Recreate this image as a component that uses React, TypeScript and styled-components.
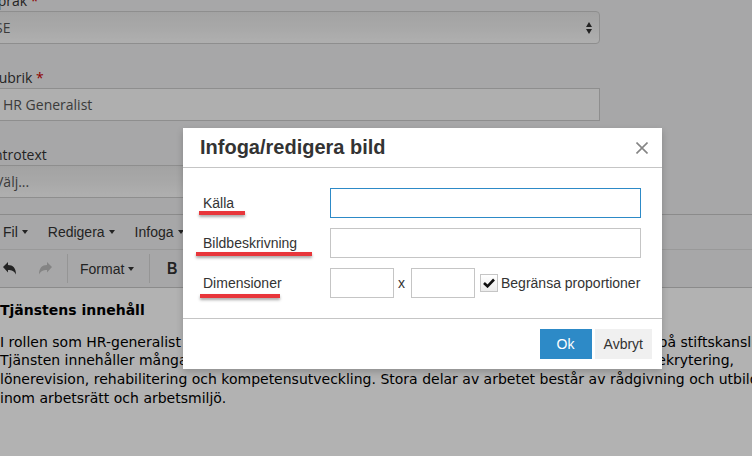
import styled, { createGlobalStyle } from "styled-components";

const GlobalStyle = createGlobalStyle`
    html, body {
        margin: 0;
        padding: 0;
    }
    body {
        width: 752px;
        height: 456px;
        overflow: hidden;
        background: #f0f0f1;
        font-family: "Open Sans", sans-serif;
    }
`;

const Page = styled.div`
    position: relative;
    width: 752px;
    height: 456px;
    overflow: hidden;
`;

const Form = styled.div`
    display: flex;
    flex-direction: column;
    gap: 24px;
    width: 610px;
    margin: -9px 0 0 -10px;
`;

const Field = styled.div`
    display: flex;
    flex-direction: column;
`;

const FieldLabel = styled.label`
    font-size: 14px;
    line-height: 20px;
    color: #333;
`;

const Required = styled.span`
    color: #c00;
`;

const SelectBox = styled.div`
    box-sizing: border-box;
    height: 33px;
    display: flex;
    align-items: center;
    justify-content: space-between;
    padding: 0 7px 0 4px;
    border: 1px solid #ccc;
    border-radius: 4px;
    background: linear-gradient(#e9e9e9, #f2f2f2 55%, #fbfbfb);
    font-size: 14px;
    color: #555;
`;

const TextInput = styled.div`
    box-sizing: border-box;
    height: 33px;
    display: flex;
    align-items: center;
    padding: 0 12px;
    border: 1px solid #ccc;
    background: #fbfbfb;
    font-size: 14px;
    color: #555;
`;

const Editor = styled.div`
    width: 900px;
    margin: 16px 0 0 -10px;
    font-family: "Liberation Sans", Arial, sans-serif;
    color: #333;
`;

const MenuBar = styled.div`
    height: 34px;
    display: flex;
    align-items: center;
    padding-left: 5px;
    gap: 4px;
    border-top: 1px solid #c8c8c8;
    border-bottom: 1px solid #dcdcdc;
`;

const MenuItem = styled.div`
    display: flex;
    align-items: center;
    gap: 4px;
    padding: 0 8px;
    font-size: 14px;
`;

const Caret = styled.span`
    width: 0;
    height: 0;
    border-left: 3px solid transparent;
    border-right: 3px solid transparent;
    border-top: 4px solid #333;
`;

const Toolbar = styled.div`
    height: 37px;
    display: flex;
    align-items: center;
    gap: 1px;
    padding-left: 3px;
    border-bottom: 1px solid #c8c8c8;
`;

const ToolButton = styled.div<{ $disabled?: boolean }>`
    width: 34px;
    height: 29px;
    display: flex;
    align-items: center;
    justify-content: center;
    color: ${({ $disabled }) => ($disabled ? "#bdbdbd" : "#333")};
`;

const MenuButton = styled.div`
    height: 29px;
    display: flex;
    align-items: center;
    gap: 4px;
    padding: 0 10px 0 7px;
    font-size: 14px;
`;

const BoldGlyph = styled.span`
    font-family: "Liberation Sans", Arial, sans-serif;
    font-weight: bold;
    font-size: 17px;
    transform: scaleX(0.85);
`;

const Separator = styled.div`
    width: 1px;
    height: 29px;
    margin: 0 4px;
    background: #d6d6d6;
`;

const Content = styled.div`
    background: #fff;
    height: 200px;
    padding: 13px 0 0 10px;
    font-family: "DejaVu Sans", Verdana, sans-serif;
    font-size: 14px;
    line-height: 18.67px;
    color: #000;
`;

const Heading = styled.p`
    margin: 0;
    font-weight: bold;
`;

const Paragraph = styled.p`
    margin: 13px 0 0;
`;

const Line = styled.span`
    display: block;
    white-space: nowrap;
`;

const Overlay = styled.div`
    position: absolute;
    inset: 0;
    background: rgba(0, 0, 0, 0.3);
`;

const Dialog = styled.div`
    position: absolute;
    left: 183px;
    top: 128px;
    width: 479px;
    background: #fff;
    box-shadow: 0 3px 7px rgba(0, 0, 0, 0.2);
    font-family: "Liberation Sans", Arial, sans-serif;
    color: #333;
`;

const DialogHeader = styled.div`
    height: 39px;
    display: flex;
    align-items: center;
    justify-content: space-between;
    padding: 0 14px 0 17px;
    border-bottom: 1px solid #c5c5c5;
`;

const Title = styled.h1`
    margin: 0;
    font-size: 20px;
    font-weight: bold;
    color: #333;
`;

const CloseButton = styled.div`
    display: flex;
    color: #858585;
`;

const DialogBody = styled.div`
    display: grid;
    grid-template-columns: 127px 1fr;
    grid-auto-rows: 30px;
    row-gap: 10px;
    padding: 20px 21px 20px 20px;
`;

const LabelCell = styled.div`
    position: relative;
    display: flex;
    align-items: center;
    font-size: 14px;
`;

const Mark = styled.div<{ $left: number; $top: number; $width: number }>`
    position: absolute;
    left: ${({ $left }) => $left}px;
    top: ${({ $top }) => $top}px;
    width: ${({ $width }) => $width}px;
    height: 4px;
    background: #e8363b;
    box-shadow: 0 2px 3px rgba(0, 0, 0, 0.35);
`;

const Input = styled.div<{ $focused?: boolean; $width?: number }>`
    box-sizing: border-box;
    flex-shrink: 0;
    height: 30px;
    width: ${({ $width }) => ($width ? `${$width}px` : "100%")};
    border: 1px solid ${({ $focused }) => ($focused ? "#2d8ac7" : "#c5c5c5")};
    background: #fff;
`;

const DimensionRow = styled.div`
    display: flex;
    align-items: center;
    font-size: 14px;
    white-space: nowrap;
`;

const Times = styled.span`
    margin: 0 6px 0 4px;
`;

const CheckBox = styled.div`
    box-sizing: border-box;
    flex-shrink: 0;
    width: 18px;
    height: 18px;
    margin: 0 3px 0 5px;
    display: flex;
    align-items: center;
    justify-content: center;
    border: 1px solid #c5c5c5;
    background: linear-gradient(#fff, #ececec);
`;

const DialogFooter = styled.div`
    display: flex;
    justify-content: flex-end;
    gap: 3px;
    padding: 10px;
    border-top: 1px solid #c5c5c5;
`;

const Button = styled.div<{ $primary?: boolean }>`
    min-width: 52px;
    height: 30px;
    box-sizing: border-box;
    display: flex;
    align-items: center;
    justify-content: center;
    padding: 0 9px;
    font-size: 14px;
    background: ${({ $primary }) => ($primary ? "#2d8ac7" : "#f0f0f0")};
    color: ${({ $primary }) => ($primary ? "#fff" : "#333")};
`;

const SelectArrows = () => (
    <svg width="6" height="12" viewBox="0 0 6 12">
        <path d="M0 5 L3 0 L6 5 Z M0 7 L3 12 L6 7 Z" fill="#333" />
    </svg>
);

const UndoIcon = () => (
    <svg width="14" height="13" viewBox="0 0 14 13">
        <path d="M0 5 L5 0 V3 C10 3 13 6 13 12.5 C11 9 9 8 5 8 V10.5 Z" fill="currentColor" />
    </svg>
);

const RedoIcon = () => (
    <svg width="14" height="13" viewBox="0 0 14 13">
        <path d="M14 5 L9 0 V3 C4 3 1 6 1 12.5 C3 9 5 8 9 8 V10.5 Z" fill="currentColor" />
    </svg>
);

const CloseIcon = () => (
    <svg width="12" height="12" viewBox="0 0 12 12">
        <path d="M0.5 0.5 L11.5 11.5 M11.5 0.5 L0.5 11.5" stroke="currentColor" strokeWidth="1.6" />
    </svg>
);

const CheckIcon = () => (
    <svg width="12" height="10" viewBox="0 0 12 10">
        <path d="M1 5 L4.5 8.3 L11 1.5" stroke="#111" strokeWidth="2.6" fill="none" />
    </svg>
);

const App = () => (
    <Page>
        <GlobalStyle />
        <Form>
            <Field>
                <FieldLabel>
                    Språk <Required>*</Required>
                </FieldLabel>
                <SelectBox>
                    SE
                    <SelectArrows />
                </SelectBox>
            </Field>
            <Field>
                <FieldLabel>
                    Rubrik <Required>*</Required>
                </FieldLabel>
                <TextInput>HR Generalist</TextInput>
            </Field>
            <Field>
                <FieldLabel>Introtext</FieldLabel>
                <SelectBox>
                    Välj...
                    <SelectArrows />
                </SelectBox>
            </Field>
        </Form>
        <Editor>
            <MenuBar>
                <MenuItem>
                    Fil <Caret />
                </MenuItem>
                <MenuItem>
                    Redigera <Caret />
                </MenuItem>
                <MenuItem>
                    Infoga <Caret />
                </MenuItem>
                <MenuItem>
                    Visa <Caret />
                </MenuItem>
            </MenuBar>
            <Toolbar>
                <ToolButton>
                    <UndoIcon />
                </ToolButton>
                <ToolButton $disabled>
                    <RedoIcon />
                </ToolButton>
                <Separator />
                <MenuButton>
                    Format <Caret />
                </MenuButton>
                <Separator />
                <ToolButton>
                    <BoldGlyph>B</BoldGlyph>
                </ToolButton>
            </Toolbar>
            <Content>
                <Heading>Tjänstens innehåll</Heading>
                <Paragraph>
                    <Line>
                        I rollen som HR-generalist kommer du att arbeta med ett väldigt brett spektrum av HR-frågor på stiftskansliet i Stockholm.
                    </Line>
                    <Line>
                        Tjänsten innehåller många olika arbetsuppgifter som bland annat arbetsrätt, lön, pensioner, rekrytering,
                    </Line>
                    <Line>
                        lönerevision, rehabilitering och kompetensutveckling. Stora delar av arbetet består av rådgivning och utbildning
                    </Line>
                    <Line>inom arbetsrätt och arbetsmiljö.</Line>
                </Paragraph>
            </Content>
        </Editor>
        <Overlay />
        <Dialog>
            <DialogHeader>
                <Title>Infoga/redigera bild</Title>
                <CloseButton>
                    <CloseIcon />
                </CloseButton>
            </DialogHeader>
            <DialogBody>
                <LabelCell>
                    Källa
                    <Mark $left={-4} $top={23} $width={46} />
                </LabelCell>
                <Input $focused />
                <LabelCell>
                    Bildbeskrivning
                    <Mark $left={-7} $top={24} $width={116} />
                </LabelCell>
                <Input />
                <LabelCell>
                    Dimensioner
                    <Mark $left={-3} $top={26} $width={80} />
                </LabelCell>
                <DimensionRow>
                    <Input $width={64} />
                    <Times>x</Times>
                    <Input $width={64} />
                    <CheckBox>
                        <CheckIcon />
                    </CheckBox>
                    Begränsa proportioner
                </DimensionRow>
            </DialogBody>
            <DialogFooter>
                <Button $primary>Ok</Button>
                <Button>Avbryt</Button>
            </DialogFooter>
        </Dialog>
    </Page>
);

export default App;
